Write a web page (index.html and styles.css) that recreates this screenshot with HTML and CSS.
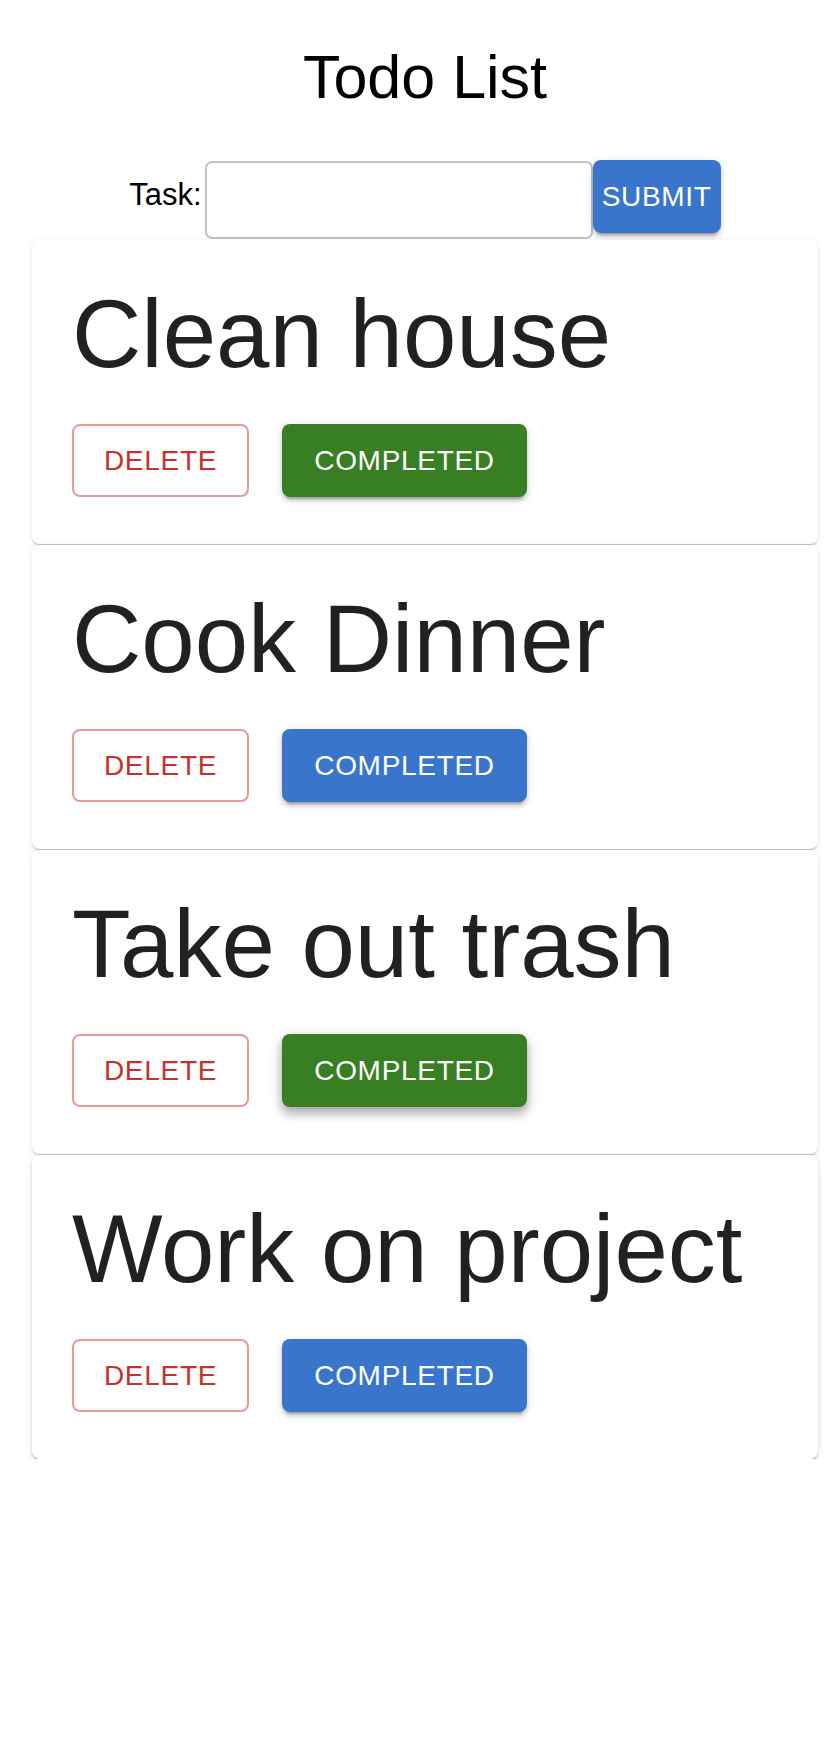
FILE: index.html
```html
<!DOCTYPE html>
<html lang="en">
<head>
<meta charset="utf-8">
<title>Todo List</title>
<link rel="stylesheet" href="styles.css">
</head>
<body>
<div class="app">
  <h1 class="page-title">Todo List</h1>
  <form class="task-form">
    <label class="task-label" for="task">Task:</label>
    <input class="task-input" id="task" type="text">
    <button class="btn btn-submit" type="button">SUBMIT</button>
  </form>
  <div class="todo-list">
    <div class="card">
      <h3 class="card-title">Clean house</h3>
      <div class="card-actions">
        <button class="btn btn-delete" type="button">DELETE</button>
        <button class="btn btn-complete is-done" type="button">COMPLETED</button>
      </div>
    </div>
    <div class="card">
      <h3 class="card-title">Cook Dinner</h3>
      <div class="card-actions">
        <button class="btn btn-delete" type="button">DELETE</button>
        <button class="btn btn-complete" type="button">COMPLETED</button>
      </div>
    </div>
    <div class="card">
      <h3 class="card-title">Take out trash</h3>
      <div class="card-actions">
        <button class="btn btn-delete" type="button">DELETE</button>
        <button class="btn btn-complete is-done is-raised" type="button">COMPLETED</button>
      </div>
    </div>
    <div class="card">
      <h3 class="card-title">Work on project</h3>
      <div class="card-actions">
        <button class="btn btn-delete" type="button">DELETE</button>
        <button class="btn btn-complete" type="button">COMPLETED</button>
      </div>
    </div>
  </div>
</div>
</body>
</html>
```

FILE: styles.css
```css
html, body {
  margin: 0;
  padding: 0;
  background: #ffffff;
}

body {
  font-family: "Liberation Sans", Arial, Helvetica, sans-serif;
  color: #000;
}

.app {
  padding-left: 14px;
}

.page-title {
  margin: 43px 0 0 0;
  font-size: 61px;
  line-height: 68px;
  font-weight: 400;
  text-align: center;
  color: #000;
}

.task-form {
  display: flex;
  justify-content: center;
  align-items: flex-start;
  margin-top: 49px;
}

.task-label {
  font-size: 31px;
  line-height: 37px;
  margin-top: 16px;
  margin-right: 3px;
  color: #000;
}

.task-input {
  box-sizing: border-box;
  width: 388px;
  height: 78px;
  margin: 1px 0 0 0;
  border: 2px solid #c2c2c2;
  border-radius: 7px;
  background: #fff;
  font-size: 26px;
  padding: 0 8px;
  outline: none;
}

.btn {
  box-sizing: border-box;
  font-family: "Liberation Sans", Arial, Helvetica, sans-serif;
  font-size: 28px;
  font-weight: 400;
  letter-spacing: 0.7px;
  height: 73px;
  border-radius: 8px;
  padding: 0;
  margin: 0;
  cursor: pointer;
  text-align: center;
}

.btn-submit {
  width: 128px;
  border: none;
  background: #3a75cc;
  color: #fff;
  box-shadow: 0 6px 2px -4px rgba(0,0,0,0.2), 0 4px 4px 0 rgba(0,0,0,0.14), 0 2px 10px 0 rgba(0,0,0,0.12);
}

.todo-list {
  display: flex;
  flex-direction: column;
  gap: 1px;
  margin: 1px 18px 0 18px;
}

.card {
  background: #fff;
  border-radius: 8px;
  padding: 38px 32px 47px 40px;
  box-shadow: 0 3px 2px -2px rgba(0,0,0,0.16), 0 2px 2px 0 rgba(0,0,0,0.1), 0 1px 6px 0 rgba(0,0,0,0.08);
}

.card:last-child {
  box-shadow: 0 4px 2px -2px rgba(0,0,0,0.2), 0 2px 2px 0 rgba(0,0,0,0.14), 0 2px 6px 0 rgba(0,0,0,0.12);
}

.card-title {
  margin: 0 0 34px 0;
  font-size: 96px;
  line-height: 112px;
  font-weight: 400;
  color: rgba(0,0,0,0.87);
}

.card-actions {
  display: flex;
  gap: 33px;
}

.btn-delete {
  width: 177px;
  background: #fff;
  border: 2px solid #e69a9a;
  color: #c9302c;
}

.btn-complete {
  width: 245px;
  border: none;
  background: #3a75cc;
  color: #fff;
  box-shadow: 0 6px 2px -4px rgba(0,0,0,0.2), 0 4px 4px 0 rgba(0,0,0,0.14), 0 2px 10px 0 rgba(0,0,0,0.12);
}

.btn-complete.is-done {
  background: #387e23;
}

.btn-complete.is-raised {
  box-shadow: 0 4px 8px -2px rgba(0,0,0,0.2), 0 8px 10px 1px rgba(0,0,0,0.14), 0 3px 14px 2px rgba(0,0,0,0.12);
}
```
